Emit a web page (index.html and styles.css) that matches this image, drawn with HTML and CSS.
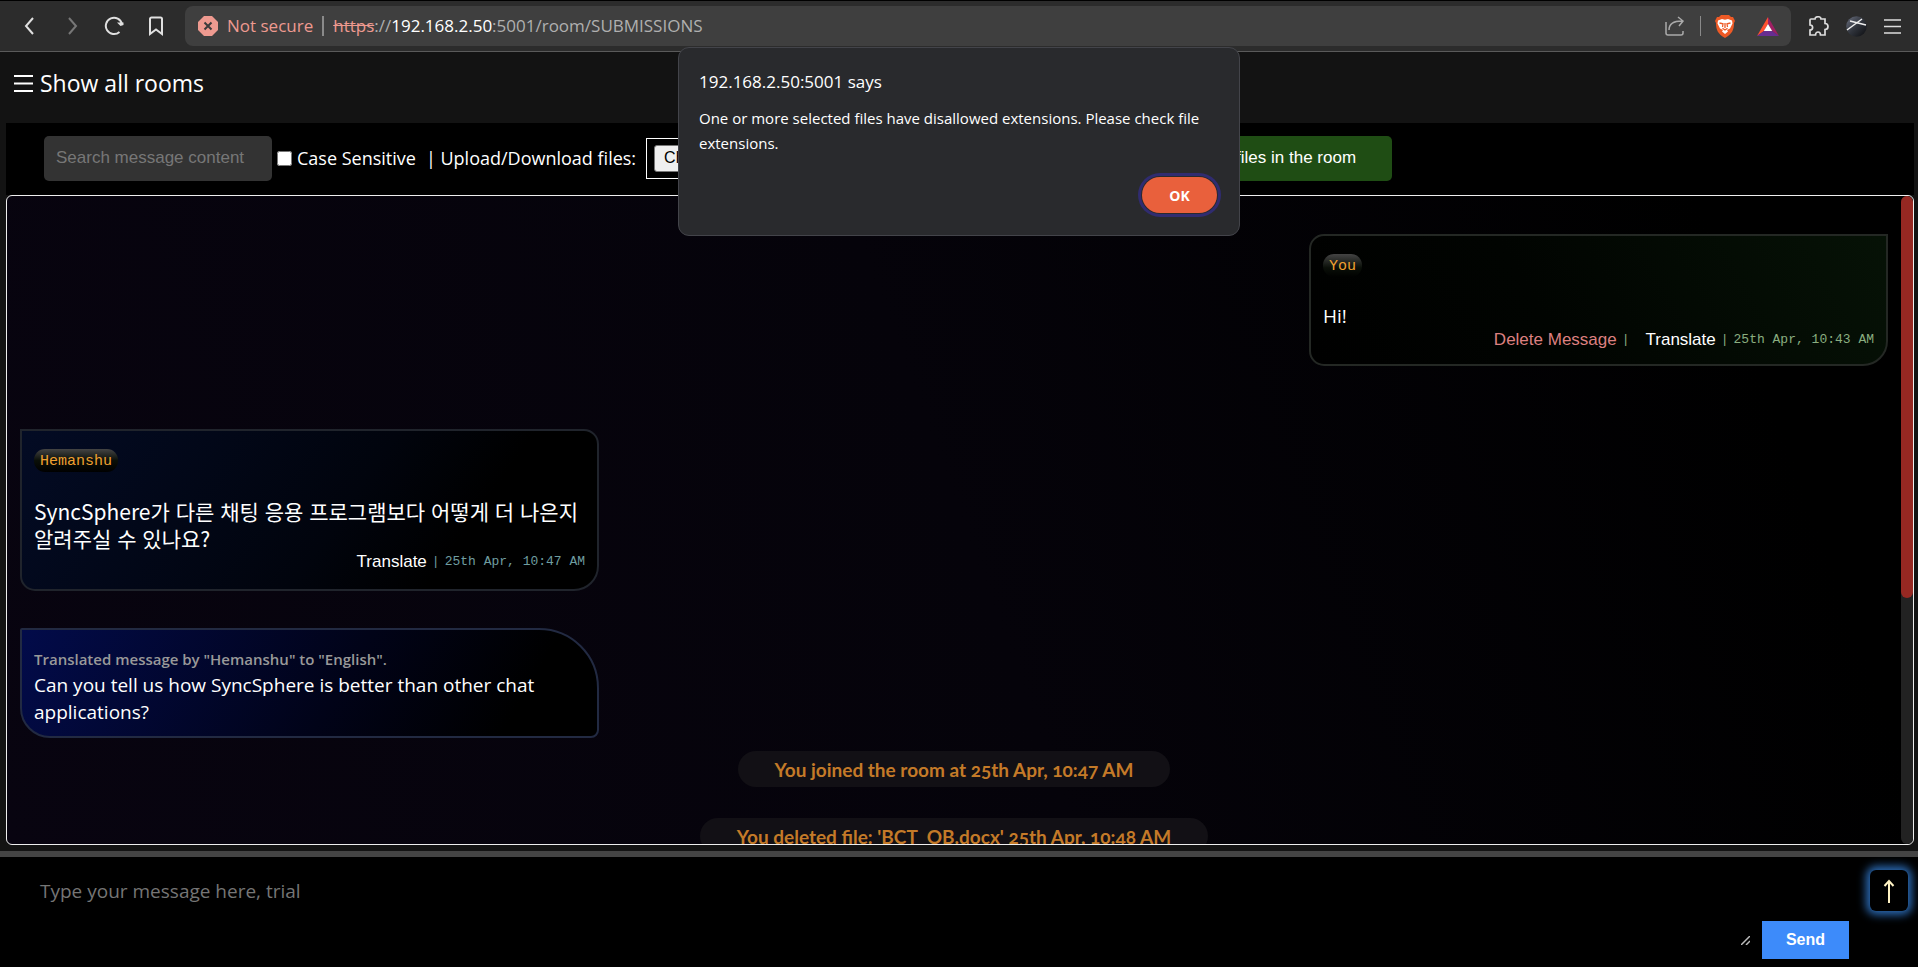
FILE: index.html
```html
<!DOCTYPE html>
<html lang="en">
<head>
<meta charset="utf-8">
<title>SUBMISSIONS</title>
<link rel="stylesheet" href="styles.css">
</head>
<body>
<div class="browser">
  <button class="nav" aria-label="Back"><svg width="20" height="20" viewBox="0 0 20 20"><path d="M13 2 6 10l7 8"/></svg></button>
  <button class="nav dim" aria-label="Forward"><svg width="20" height="20" viewBox="0 0 20 20"><path d="m7 2 7 8-7 8"/></svg></button>
  <button class="nav" aria-label="Reload"><svg width="20" height="20" viewBox="0 0 20 20"><path d="M15.500 16A8.200 8.200 0 1 1 18 8"/><path class="solid" d="M13 6.500h6.500V9L16.500 10z"/></svg></button>
  <button class="nav" aria-label="Bookmark"><svg width="20" height="20" viewBox="0 0 20 20"><path d="M4 3a1.500 1.500 0 0 1 1.500-1.500h9A1.500 1.500 0 0 1 16 3v15l-6-4.500L4 18z"/></svg></button>
  <div class="address">
    <svg width="20" height="20" viewBox="0 0 20 20"><path fill="#ee9a90" d="M6 0h8l6 6v8l-6 6H6l-6-6V6z"/><path d="m6.500 6.500 7 7m0-7-7 7" stroke="#3b3b3b" stroke-width="2"/></svg>
    <span class="insecure">Not secure</span>
    <span class="sep"></span>
    <span class="url"><s>https</s>://<b>192.168.2.50</b>:5001/room/SUBMISSIONS</span>
    <button class="tool" aria-label="Share"><svg width="22" height="20" viewBox="0 0 22 20" fill="none" stroke="#aaa" stroke-width="1.500"><path d="M2 6v11a2 2 0 0 0 2 2h13a2 2 0 0 0 2-2v-2M5 14c0-6 4-9 13-9M14 1l5 4-4 5"/></svg></button>
    <span class="sep small"></span>
    <button class="tool" aria-label="Brave Shields"><svg width="20" height="23" viewBox="0 0 20 23"><path fill="#ee5a26" d="M6 0h8l2 2 2 0 2 4-1 2c0 7-2 11-9 15C3 19 1 15 1 8L0 6l2-4h2z"/><path fill="#fff" d="M3 5.500 7 4l3 .7L13 4l4 1.500.5 3-2.500 5-3 1.500 1 1.500-3 2.500-3-2.500L8 15l-3-1.500-2.500-5z"/><path fill="none" stroke="#ee5a26" stroke-width="1.300" d="M4.500 8 8 8.800 7.500 12m8-4L12 8.800l.5 3.200M10 8v5m-2.500.3L10 15l2.500-1.700"/></svg></button>
    <button class="tool" aria-label="Rewards"><svg width="22" height="19" viewBox="0 0 22 19"><path fill="#ff5030" d="M11 0v7l-4 7-7 5z"/><path fill="#9e1f63" d="M11 0v7l4 7 7 5z"/><path fill="#662d91" d="m0 19 7-5h8l7 5z"/><path fill="#fff" d="m11 7 4.200 7H6.800z"/></svg></button>
  </div>
  <button class="side" aria-label="Extensions"><svg width="21" height="21" viewBox="0 0 21 21" fill="none" stroke="#ddd" stroke-width="1.700"><path d="M3 3h4c0-3 6-3 6 0h4v4.500c4 0 4 6 0 6V19h-4.500c0-4-5-4-5 0H2v-5c3.500 0 3.500-5 0-5V4a1 1 0 0 1 1-1z"/></svg></button>
  <button class="side" aria-label="Profile"><svg width="21" height="21" viewBox="0 0 21 21"><defs><linearGradient id="orb" x1="0" y1="0" x2="1" y2="1"><stop offset="0" stop-color="#6b7080"/><stop offset=".5" stop-color="#30343c"/><stop offset="1" stop-color="#0b0c0f"/></linearGradient></defs><circle cx="10.500" cy="10.500" r="10.300" fill="url(#orb)"/><path d="M1 14 16 3M4 5l16 4" stroke="#eee" stroke-width="1.500"/></svg></button>
  <button class="side" aria-label="Menu"><svg width="17" height="15" viewBox="0 0 17 15" stroke="#ddd" stroke-width="1.600"><path d="M0 1h17M0 7.500h17M0 14h17"/></svg></button>
</div>

<header class="header"><button class="rooms"><svg width="19" height="19" viewBox="0 0 19 19" stroke="#fff" stroke-width="2"><path d="M0 2h19M0 9.500h19M0 17h19"/></svg>Show all rooms</button></header>

<div class="page">
  <div class="toolbar">
    <input class="search" type="text" aria-label="Search" placeholder="Search message content">
    <input class="case" id="case" type="checkbox"><label for="case">Case Sensitive</label>
    <label class="upload" for="files">| Upload/Download files:</label>
    <input class="files" id="files" type="file" multiple>
    <button class="show-files">files in the room</button>
  </div>
  <main class="chat">
    <div class="messages">
      <article class="bubble mine">
        <span class="name">You</span>
        <p>Hi!</p>
        <footer><button class="delete">Delete Message</button><span class="bar wide">|</span><button>Translate</button><span class="bar">|</span><time>25th Apr, 10:43 AM</time></footer>
      </article>
      <article class="bubble theirs">
        <span class="name">Hemanshu</span>
        <p lang="ko">SyncSphere가 다른 채팅 응용 프로그램보다 어떻게 더 나은지 알려주실 수 있나요?</p>
        <footer><button>Translate</button><span class="bar">|</span><time>25th Apr, 10:47 AM</time></footer>
      </article>
      <article class="bubble translated">
        <h2>Translated message by "Hemanshu" to "English".</h2>
        <p>Can you tell us how SyncSphere is better than other chat applications?</p>
      </article>
      <div class="notice">You joined the room at 25th Apr, 10:47 AM</div>
      <div class="notice">You deleted file: 'BCT_OB.docx' 25th Apr, 10:48 AM</div>
    </div>
    <div class="track"><div class="thumb"></div></div>
  </main>
</div>

<form class="composer">
  <div class="entry">
    <textarea aria-label="Message" placeholder="Type your message here, trial"></textarea>
    <svg class="grip" width="9" height="9" viewBox="0 0 9 9" stroke="#bbb" stroke-width="1.500"><path d="M0 9 9 0M5 9l4-4"/></svg>
  </div>
  <button class="send" type="button">Send</button>
  <button class="up" type="button" aria-label="Scroll to top"><svg width="12" height="24" viewBox="0 0 12 24" fill="none" stroke="#fff3c4" stroke-width="2"><path d="M6 24V2M1.500 7 6 2l4.500 5"/></svg></button>
</form>

<div class="overlay">
  <div class="dialog" role="alertdialog" aria-labelledby="dt" aria-describedby="dd">
    <h1 id="dt">192.168.2.50:5001 says</h1>
    <p id="dd">One or more selected files have disallowed extensions. Please check file extensions.</p>
    <button class="ok">OK</button>
  </div>
</div>
</body>
</html>
```
FILE: styles.css
```css
* { box-sizing: border-box; }
body {
  margin: 0;
  height: 100vh;
  display: flex;
  flex-direction: column;
  overflow: hidden;
  background: #131313;
  color: #fff;
  font-family: "Open Sans", "Noto Sans CJK KR", sans-serif;
}
button { border: 0; padding: 0; background: none; color: inherit; font-family: inherit; }
h1, h2, p { margin: 0; font-weight: 400; }
svg { display: block; }

.browser {
  height: 52px;
  flex: none;
  display: flex;
  align-items: center;
  padding: 0 17px 0 20px;
  background: #2c2c2c;
  border-top: 1px solid #000;
  border-bottom: 1px solid #5a5a5a;
}
.nav { margin-right: 22px; }
.nav:nth-child(4) { margin-right: 19px; }
.nav svg { fill: none; stroke: #e0e0e0; stroke-width: 2; }
.nav .solid { fill: #e0e0e0; stroke: none; }
.nav.dim svg { stroke: #777; }
.address {
  flex: 1;
  height: 40px;
  display: flex;
  align-items: center;
  padding: 0 12px 0 13px;
  border-radius: 8px;
  background: #3f3f3f;
  font-size: 17px;
  line-height: 22px;
}
.insecure { margin-left: 9px; color: #ee9a90; }
.sep { width: 2px; height: 20px; margin: 0 9px; background: #8a8a8a; }
.sep.small { width: 1px; margin: 0 14px; }
.url { flex: 1; color: #b0b0b0; }
.url s { color: #ee9a90; }
.url b { color: #fff; font-weight: 400; }
.tool + .tool { margin-left: 22px; }
.side { margin-left: 17px; }

.header { flex: none; height: 71px; padding: 13px 14px 0; }
.rooms { display: flex; align-items: center; gap: 7px; font-size: 23px; line-height: 36px; }

.page { flex: 1; min-height: 0; display: flex; flex-direction: column; padding: 0 4px 6px 6px; }
.toolbar {
  height: 72px;
  flex: none;
  display: flex;
  align-items: center;
  padding: 0 38px 2px;
  background: #000;
  font-size: 18px;
}
.search {
  width: 228px;
  height: 45px;
  padding: 0 12px;
  border: 0;
  border-radius: 5px;
  background: #333;
  color: #fff;
  font: 17px "Liberation Sans", sans-serif;
}
.search::placeholder { color: #777; }
.case { width: 15px; height: 15px; margin: 0 5px; }
.upload { margin: 0 10px; }
.files {
  width: 330px;
  height: 41px;
  padding: 6px 7px;
  border: 1px solid #fff;
  font: 16px "Liberation Sans", sans-serif;
}
.files::file-selector-button { font: 16px "Liberation Sans", sans-serif; color: #000; background: #efefef; border: 1px solid #767676; border-radius: 3px; height: 27px; padding: 0 9px; }
.show-files {
  width: 404px;
  height: 45px;
  margin-left: 12px;
  padding-right: 36px;
  border-radius: 5px;
  background: #1f4d14;
  text-align: right;
  font: 17px "Liberation Sans", sans-serif;
}

.chat {
  flex: 1;
  min-height: 0;
  display: flex;
  overflow: hidden;
  border: 1px solid #eee;
  border-radius: 6px;
  background: linear-gradient(70deg, #080410, #05030a 50%, #000 90%);
}
.messages { flex: 1; min-width: 0; display: flex; flex-direction: column; padding: 38px 13px 0; }
.track { width: 12px; flex: none; border-radius: 6px; background: #222; }
.thumb { height: 62%; border-radius: 6px; background: #962822; }

.bubble {
  flex: none;
  width: 31%;
  padding: 18px 12px 16px;
  border: 2px solid #262a2c;
  font-size: 19px;
  line-height: 27px;
}
.mine { align-self: flex-end; margin-bottom: 63px; padding-bottom: 14px; border-color: #242824; border-radius: 15px 0 25px 15px; background: linear-gradient(60deg, #000, #010401 40%, #061206); }
.theirs { margin-bottom: 37px; padding-bottom: 17px; border-color: #20242c; border-radius: 0 15px 25px 15px; background: linear-gradient(125deg, #030b24, #01040d 55%, #000 75%); }
.theirs p { font-family: "Noto Sans CJK KR", sans-serif; font-size: 21px; word-break: keep-all; }
.translated { margin-bottom: 13px; padding: 16px 12px 10px; border-color: #222a42; border-radius: 2px 60px 8px 30px; background: linear-gradient(120deg, #020b4a, #010318 55%, #000 85%); }
.name {
  display: block;
  width: max-content;
  height: 23px;
  margin-bottom: 26px;
  padding: 0 6px;
  border-radius: 11px;
  background: linear-gradient(#444, #0a0f08 50%, #000);
  color: #f0a030;
  font: 15px/25px "Liberation Mono", monospace;
}
.mine .name { background: linear-gradient(#444, #0a0f08 60%, transparent); }
.bubble footer { display: flex; justify-content: flex-end; align-items: center; font: 13px/20px "Liberation Mono", monospace; color: #8aae80; }
.theirs footer { color: #6f9ea0; }
.bubble footer button { color: #fff; font: 17px/20px "Liberation Sans", sans-serif; }
.bubble footer .delete { color: #dd8080; }
.bar { margin: 0 5px; }
.bar.wide { margin-right: 16px; }
.translated h2 { font-size: 15px; font-weight: 600; line-height: 26px; color: #999; }
.notice {
  align-self: center;
  flex: none;
  height: 36px;
  margin-bottom: 31px;
  padding: 0 37px;
  border-radius: 18px;
  background: #121015;
  color: #c47a28;
  font: 700 19px/37px Lato, sans-serif;
  font-variant-numeric: oldstyle-nums;
}

.composer {
  flex: none;
  height: 116px;
  display: flex;
  align-items: flex-end;
  padding: 0 10px 8px 6px;
  border-top: 6px solid #444;
  background: #000;
}
.entry { position: relative; flex: 1; height: 92px; }
.composer textarea {
  display: block;
  width: 100%;
  height: 100%;
  padding: 10px 34px;
  border: 0;
  background: #000;
  color: #fff;
  font: 19px/28px "Open Sans", sans-serif;
  resize: none;
}
.grip { position: absolute; right: 2px; bottom: 14px; }
.composer textarea::placeholder { color: #757575; }
.send { width: 87px; height: 38px; margin: 0 21px 0 10px; background: #3d8bfa; font: 700 16px "Liberation Sans", sans-serif; }
.up {
  width: 38px;
  height: 41px;
  margin-bottom: 48px;
  display: flex;
  align-items: center;
  justify-content: center;
  border-radius: 6px;
  background: #000;
  box-shadow: 0 0 8px 4px #2a68b0;
}

.overlay { position: absolute; top: 47px; left: 0; right: 0; display: flex; justify-content: center; }
.dialog {
  width: 562px;
  padding: 20px 22px 22px 20px;
  display: flex;
  flex-direction: column;
  border: 1px solid #43444a;
  border-radius: 11px;
  background: #292a2d;
}
.dialog h1 { font-size: 17px; line-height: 28px; margin-bottom: 10px; }
.dialog p { font-size: 15px; line-height: 25px; }
.ok {
  align-self: flex-end;
  width: 75px;
  height: 36px;
  margin-top: 21px;
  border-radius: 18px;
  background: #e9603c;
  box-shadow: 0 0 0 1px #292a2d, 0 0 0 4px #302c70;
  font-size: 14px;
  font-weight: 700;
}
```
